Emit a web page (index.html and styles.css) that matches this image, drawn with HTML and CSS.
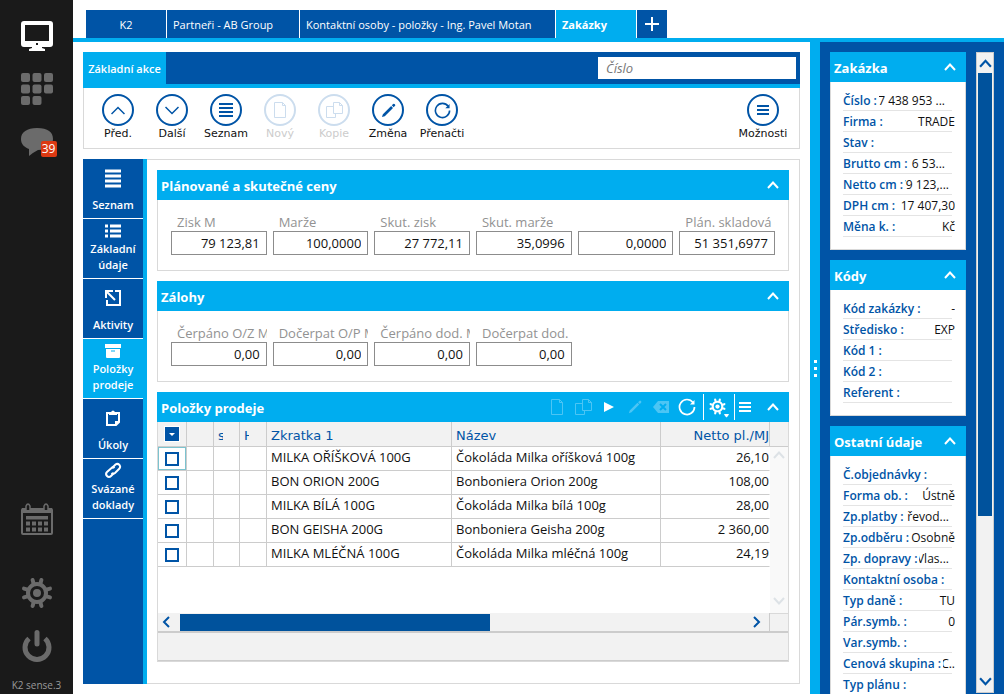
FILE: index.html
```html
<!DOCTYPE html>
<html lang="cs">
<head>
<meta charset="utf-8">
<title>K2 – Zakázky</title>
<link rel="stylesheet" href="styles.css">
</head>
<body>
<svg class="defs" aria-hidden="true">
  <symbol id="up" viewBox="0 0 12 8"><path d="M1 7L6 1.500L11 7" fill="none" stroke="currentColor" stroke-width="2"/></symbol>
  <symbol id="down" viewBox="0 0 12 8"><path d="M1 1L6 6.500L11 1" fill="none" stroke="currentColor" stroke-width="2"/></symbol>
  <symbol id="doc" viewBox="0 0 16 16"><path d="M2.500 .5H10.500L13.500 3.500V15.500H2.500ZM10.500 .5V3.500H13.500" fill="none" stroke="currentColor"/></symbol>
  <symbol id="copy" viewBox="0 0 18 16"><path d="M8.500 .5H14.500L17.500 3.500V11.500H8.500ZM14.500 .5V3.500H17.500M8.500 4.500H1.500V15.500H10.500V11.500" fill="none" stroke="currentColor"/></symbol>
  <symbol id="pencil" viewBox="0 0 16 16"><path d="M1 15L2 12L10.800 3.200L12.800 5.200L4 14ZM11.500 2.500L13 1Q13.800 .3 14.800 1.200Q15.700 2.200 15 3L13.500 4.500Z" fill="currentColor"/></symbol>
  <symbol id="reload" viewBox="0 0 18 18"><path d="M15 4.500A7.500 7.500 0 1 0 16.500 9" fill="none" stroke="currentColor" stroke-width="1.700"/><path d="M16.500 2V6.500H12Z" fill="currentColor"/></symbol>
  <symbol id="gear" viewBox="0 0 32 32"><g stroke="currentColor" fill="none"><circle cx="16" cy="16" r="9" stroke-width="4"/><path stroke-linecap="round" d="M12.600 6.500L11.600 3M19.400 6.500L20.400 3M12.600 25.500L11.600 29M19.400 25.500L20.400 29M6.500 12.600L3 11.600M6.500 19.400L3 20.400M25.500 12.600L29 11.600M25.500 19.400L29 20.400" stroke-width="4"/></g><circle cx="16" cy="16" r="4" fill="currentColor"/></symbol>
</svg>
<div class="app">
  <nav class="rail" aria-label="Aplikace">
    <button class="rail-btn on" aria-label="Plocha"><svg width="32" height="32" viewBox="0 0 32 32"><path fill="currentColor" fill-rule="evenodd" d="M3 1H29Q32 1 32 4V24Q32 27 29 27H21V28L24 29V31H8V29L11 28V27H3Q0 27 0 24V4Q0 1 3 1ZM4 5V21H28V5ZM15 23V25H17V23Z"/></svg></button>
    <button class="rail-btn" aria-label="Moduly"><svg width="32" height="32" viewBox="0 0 32 32" fill="currentColor"><rect width="9" height="9" rx="2"/><rect x="11.500" width="9" height="9" rx="2"/><rect x="23" width="9" height="9" rx="2"/><rect y="11.500" width="9" height="9" rx="2"/><rect x="11.500" y="11.500" width="9" height="9" rx="2"/><rect x="23" y="11.500" width="9" height="9" rx="2"/><rect y="23" width="9" height="9" rx="2"/><rect x="11.500" y="23" width="9" height="9" rx="2"/></svg></button>
    <button class="rail-btn" aria-label="Zprávy"><svg width="32" height="32" viewBox="0 0 32 32"><path fill="currentColor" d="M16 2C27 2 32 6 32 13S26 24 17 24Q13 26 8 30V23C3 21 0 18 0 13C0 6 6 2 16 2Z"/></svg><span class="count">39</span></button>
    <button class="rail-btn bottom" aria-label="Kalendář"><svg width="32" height="32" viewBox="0 0 32 32"><rect x="1" y="6" width="30" height="25" rx="1" fill="none" stroke="currentColor" stroke-width="2"/><path d="M1 5H31V10H1Z" fill="currentColor"/><path d="M5 7V3Q7 -1 9 3V7M23 7V3Q25 -1 27 3V7" fill="#1a1a1a" stroke="currentColor" stroke-width="1.500"/><path d="M5 13H27V16.500H5Z" fill="currentColor"/><path d="M5 20.500H27M5 26.500H27" stroke="currentColor" stroke-width="4" stroke-dasharray="4 2"/></svg></button>
    <button class="rail-btn settings" aria-label="Nastavení"><svg width="32" height="32"><use href="#gear"/></svg></button>
    <button class="rail-btn" aria-label="Odhlásit"><svg width="32" height="32" viewBox="0 0 32 32" fill="none" stroke="currentColor" stroke-width="5"><path d="M16 2.500V14" stroke-linecap="round"/><path d="M8 8.500A12 12 0 1 0 24 8.500"/></svg></button>
    <span class="version">K2 sense.3</span>
  </nav>
  <div class="stage">
    <header class="tabs">
      <button class="tab center">K2</button>
      <button class="tab partners">Partneři - AB Group</button>
      <button class="tab contacts">Kontaktní osoby - položky - Ing. Pavel Motan</button>
      <button class="tab active">Zakázky</button>
      <button class="tab add" aria-label="Nová záložka"><svg width="14" height="14"><path d="M7 0V14M0 7H14" stroke="#fff" stroke-width="2"/></svg></button>
    </header>
    <div class="work">
      <main class="main">
        <section class="actions">
          <div class="actions-head">
            <button class="actions-tab">Základní akce</button>
            <input class="search" type="text" placeholder="Číslo" aria-label="Číslo">
          </div>
          <div class="actions-body">
            <button class="act"><span class="ring"><svg width="14" height="9" viewBox="0 0 14 9"><path d="M.5 8L7 1.500L13.500 8" fill="none" stroke="currentColor" stroke-width="1.500"/></svg></span>Před.</button>
            <button class="act"><span class="ring"><svg width="14" height="9" viewBox="0 0 14 9"><path d="M.5 1L7 7.500L13.500 1" fill="none" stroke="currentColor" stroke-width="1.500"/></svg></span>Další</button>
            <button class="act"><span class="ring"><svg width="14" height="14"><path d="M0 1H14M0 5H14M0 9H14M0 13H14" stroke="currentColor" stroke-width="2"/></svg></span>Seznam</button>
            <button class="act" disabled><span class="ring"><svg width="16" height="16"><use href="#doc"/></svg></span>Nový</button>
            <button class="act" disabled><span class="ring"><svg width="18" height="16"><use href="#copy"/></svg></span>Kopie</button>
            <button class="act"><span class="ring"><svg width="15" height="15"><use href="#pencil"/></svg></span>Změna</button>
            <button class="act"><span class="ring"><svg width="17" height="17"><use href="#reload"/></svg></span>Přenačti</button>
            <button class="act last"><span class="ring"><svg width="12" height="10"><path d="M0 1H12M0 5H12M0 9H12" stroke="currentColor" stroke-width="2"/></svg></span>Možnosti</button>
          </div>
        </section>
        <div class="detail">
          <nav class="menu" aria-label="Záložky zakázky">
            <button class="item"><svg width="16" height="20"><path d="M0 3H16M0 8H16M0 13H16M0 18H16" stroke="#fff" stroke-width="3"/></svg>Seznam</button>
            <button class="item two"><svg width="16" height="20"><path d="M0 6H3M5 6H16M0 11H3M5 11H16M0 16H3M5 16H16" stroke="#fff" stroke-width="3"/></svg>Základní údaje</button>
            <button class="item"><svg width="16" height="20"><path d="M10 3H15V17H2V12M1 10V3H8M2 4L10 12" fill="none" stroke="#fff" stroke-width="2"/></svg>Aktivity</button>
            <button class="item two active"><svg width="16" height="20"><path d="M0 4H16V8H0ZM1 9H15V17Q15 18 14 18H2Q1 18 1 17Z" fill="#fff"/><path d="M6 11H10" stroke="#00adef" stroke-width="1"/></svg>Položky prodeje</button>
            <button class="item"><svg width="16" height="20"><path d="M5 5H2V17H11L14 14V5H11M11 17V14H14" fill="none" stroke="#fff" stroke-width="2"/><path d="M4 7V4H6Q8 1 10 4H12V7Z" fill="#fff"/></svg>Úkoly</button>
            <button class="item two"><svg width="18" height="20" fill="none" stroke="#fff" stroke-width="2"><path d="M8 8L11.500 4.500Q13.500 3 15.500 5Q17 7 15 9L11 13Q9 14.500 7.500 13"/><path d="M10 13L7 16Q5 18 3 16Q1 14 3 12L7.500 8Q9 6.500 10.500 8"/></svg>Svázané doklady</button>
          </nav>
          <div class="panels">
            <section class="panel">
              <header class="bar"><h2>Plánované a skutečné ceny</h2><button class="fold" aria-label="Sbalit"><svg width="12" height="8"><use href="#up"/></svg></button></header>
              <div class="fields">
                <label class="field"><span>Zisk M</span><input value="79 123,81"></label>
                <label class="field"><span>Marže</span><input value="100,0000"></label>
                <label class="field"><span>Skut. zisk</span><input value="27 772,11"></label>
                <label class="field"><span>Skut. marže</span><input value="35,0996"></label>
                <label class="field"><span></span><input value="0,0000" aria-label="Hodnota"></label>
                <label class="field"><span>Plán. skladová c</span><input value="51 351,6977"></label>
              </div>
            </section>
            <section class="panel">
              <header class="bar"><h2>Zálohy</h2><button class="fold" aria-label="Sbalit"><svg width="12" height="8"><use href="#up"/></svg></button></header>
              <div class="fields">
                <label class="field"><span>Čerpáno O/Z M</span><input value="0,00"></label>
                <label class="field"><span>Dočerpat O/P M</span><input value="0,00"></label>
                <label class="field"><span>Čerpáno dod. M</span><input value="0,00"></label>
                <label class="field"><span>Dočerpat dod. M</span><input value="0,00"></label>
              </div>
            </section>
            <section class="panel grid-panel">
              <header class="bar"><h2>Položky prodeje</h2>
                <div class="tools">
                  <button class="tool" disabled aria-label="Nový"><svg width="16" height="16"><use href="#doc"/></svg></button>
                  <button class="tool" disabled aria-label="Kopie"><svg width="18" height="16"><use href="#copy"/></svg></button>
                  <button class="tool" aria-label="Spustit"><svg width="10" height="10"><path d="M0 0L10 5L0 10Z" fill="currentColor"/></svg></button>
                  <button class="tool" disabled aria-label="Změna"><svg width="14" height="14"><use href="#pencil"/></svg></button>
                  <button class="tool" disabled aria-label="Smazat"><svg width="16" height="12"><path d="M5 0H16V12H5L0 6Z" fill="currentColor"/><path d="M7 3L13 9M13 3L7 9" stroke="#00adef" stroke-width="2"/></svg></button>
                  <button class="tool" aria-label="Přenačti"><svg width="18" height="18"><use href="#reload"/></svg></button>
                  <button class="tool split" aria-label="Nastavení"><svg width="20" height="22" viewBox="0 0 20 22"><svg width="17" height="17" y="2" viewBox="0 0 32 32"><use href="#gear"/></svg><path d="M15 18H20L19 20L17.500 21.500L16 20Z" fill="currentColor"/></svg></button>
                  <button class="tool menu-tool" aria-label="Možnosti"><svg width="12" height="10"><path d="M0 1H12M0 5H12M0 9H12" stroke="currentColor" stroke-width="2"/></svg></button>
                </div>
                <button class="fold" aria-label="Sbalit"><svg width="12" height="8"><use href="#up"/></svg></button>
              </header>
              <div class="grid-body">
                <div class="table-area">
                  <table class="grid">
                    <colgroup><col class="c-check"><col class="c-a"><col class="c-b"><col class="c-a"><col class="c-code"><col><col class="c-price"></colgroup>
                    <thead><tr><th class="pick"><button class="pick-all" aria-label="Výběr"><svg width="6" height="3"><path d="M0 0H6L3 3Z" fill="#fff"/></svg></button></th><th></th><th class="short"><span>s</span></th><th class="short"><span>H</span></th><th>Zkratka 1</th><th>Název</th><th class="num">Netto pl./MJ</th></tr></thead>
                    <tbody>
                      <tr><td class="pick current"><input type="checkbox" aria-label="MILKA OŘÍŠKOVÁ 100G"></td><td></td><td></td><td></td><td>MILKA OŘÍŠKOVÁ 100G</td><td>Čokoláda Milka oříšková 100g</td><td class="num">26,10</td></tr>
                      <tr><td class="pick"><input type="checkbox" aria-label="BON ORION 200G"></td><td></td><td></td><td></td><td>BON ORION 200G</td><td>Bonboniera Orion 200g</td><td class="num">108,00</td></tr>
                      <tr><td class="pick"><input type="checkbox" aria-label="MILKA BÍLÁ 100G"></td><td></td><td></td><td></td><td>MILKA BÍLÁ 100G</td><td>Čokoláda Milka bílá 100g</td><td class="num">28,00</td></tr>
                      <tr><td class="pick"><input type="checkbox" aria-label="BON GEISHA 200G"></td><td></td><td></td><td></td><td>BON GEISHA 200G</td><td>Bonboniera Geisha 200g</td><td class="num">2 360,00</td></tr>
                      <tr><td class="pick"><input type="checkbox" aria-label="MILKA MLÉČNÁ 100G"></td><td></td><td></td><td></td><td>MILKA MLÉČNÁ 100G</td><td>Čokoláda Milka mléčná 100g</td><td class="num">24,19</td></tr>
                    </tbody>
                  </table>
                </div>
                <div class="vscroll"><div class="vhead"></div><svg width="12" height="8"><use href="#up"/></svg><svg class="end" width="12" height="8"><use href="#down"/></svg></div>
                <div class="hscroll"><svg width="8" height="12"><path d="M7 1L2 6L7 11" fill="none" stroke="currentColor" stroke-width="2"/></svg><div class="htrack"><div class="hthumb"></div></div><svg width="8" height="12"><path d="M1 1L6 6L1 11" fill="none" stroke="currentColor" stroke-width="2"/></svg></div>
                <div class="corner"></div>
              </div>
              <footer class="grid-foot"></footer>
            </section>
          </div>
        </div>
      </main>
      <div class="splitter"><i></i><i></i><i></i></div>
      <aside class="side">
        <div class="cards">
          <section class="card">
            <header class="bar"><h2>Zakázka</h2><button class="fold" aria-label="Sbalit"><svg width="12" height="8"><use href="#up"/></svg></button></header>
            <dl>
              <div class="row"><dt>Číslo :</dt><dd class="cut wide">7 438 953 ...</dd></div>
              <div class="row"><dt>Firma :</dt><dd>TRADE</dd></div>
              <div class="row"><dt>Stav :</dt><dd></dd></div>
              <div class="row"><dt>Brutto cm :</dt><dd class="cut wide">6 53...</dd></div>
              <div class="row"><dt>Netto cm :</dt><dd class="cut">79 123,...</dd></div>
              <div class="row"><dt>DPH cm :</dt><dd>17 407,30</dd></div>
              <div class="row"><dt>Měna k. :</dt><dd>Kč</dd></div>
            </dl>
          </section>
          <section class="card">
            <header class="bar"><h2>Kódy</h2><button class="fold" aria-label="Sbalit"><svg width="12" height="8"><use href="#up"/></svg></button></header>
            <dl>
              <div class="row"><dt>Kód zakázky :</dt><dd>-</dd></div>
              <div class="row"><dt>Středisko :</dt><dd>EXP</dd></div>
              <div class="row"><dt>Kód 1 :</dt><dd></dd></div>
              <div class="row"><dt>Kód 2 :</dt><dd></dd></div>
              <div class="row"><dt>Referent :</dt><dd></dd></div>
            </dl>
          </section>
          <section class="card">
            <header class="bar"><h2>Ostatní údaje</h2><button class="fold" aria-label="Sbalit"><svg width="12" height="8"><use href="#up"/></svg></button></header>
            <dl>
              <div class="row"><dt>Č.objednávky :</dt><dd></dd></div>
              <div class="row"><dt>Forma ob. :</dt><dd>Ústně</dd></div>
              <div class="row"><dt>Zp.platby :</dt><dd class="cut">řevod...</dd></div>
              <div class="row"><dt>Zp.odběru :</dt><dd>Osobně</dd></div>
              <div class="row"><dt>Zp. dopravy :</dt><dd class="cut">Vlas...</dd></div>
              <div class="row"><dt>Kontaktní osoba :</dt><dd></dd></div>
              <div class="row"><dt>Typ daně :</dt><dd>TU</dd></div>
              <div class="row"><dt>Pár.symb. :</dt><dd>0</dd></div>
              <div class="row"><dt>Var.symb. :</dt><dd></dd></div>
              <div class="row"><dt>Cenová skupina :</dt><dd>C..</dd></div>
              <div class="row"><dt>Typ plánu :</dt><dd></dd></div>
            </dl>
          </section>
        </div>
        <div class="side-scroll"><svg width="13" height="9"><use href="#up"/></svg><div class="track"><div class="thumb"></div></div><svg width="13" height="9"><use href="#down"/></svg></div>
      </aside>
    </div>
  </div>
</div>
</body>
</html>
```
FILE: styles.css
```css
:root {
  --blue: #0054a6;
  --cyan: #00adef;
  --line: #d9d9d9;
}
* { box-sizing: border-box; }
body {
  margin: 0;
  font-family: "Open Sans", "Noto Sans", sans-serif;
  font-size: 13px;
  color: #111;
  background: #fff;
}
button, input { font: inherit; color: inherit; margin: 0; border-radius: 0; }
button { border: 0; padding: 0; background: none; }
svg { display: block; flex: none; }
h2, dl, dd { margin: 0; }
.defs { display: none; }
.app { display: flex; height: 100vh; overflow: hidden; }

.rail {
  flex: none;
  width: 73px;
  padding-top: 20px;
  background: #1a1a1a;
  color: #6b6b6b;
  display: flex;
  flex-direction: column;
  align-items: center;
}
.rail-btn { position: relative; flex: none; height: 32px; margin-bottom: 21px; }
.rail-btn.on { color: #fff; }
.rail-btn.bottom { margin-top: auto; margin-bottom: 42px; }
.rail-btn.settings + .rail-btn { margin-bottom: 15px; }
.count {
  position: absolute;
  left: 20px;
  top: 15px;
  width: 16px;
  border-radius: 2px;
  background: #dc3912;
  color: #fff;
  font-size: 12px;
  line-height: 16px;
}
.version { font-size: 10px; line-height: 16px; padding-bottom: 1px; color: #999; white-space: nowrap; }

.stage { flex: 1; min-width: 0; display: flex; flex-direction: column; }
.tabs {
  flex: none;
  display: flex;
  gap: 1px;
  padding: 10px 0 0 13px;
  border-bottom: 4px solid var(--cyan);
}
.tab {
  height: 28px;
  padding: 0 6px;
  background: var(--blue);
  color: #fff;
  font-size: 11px;
  text-align: left;
  white-space: nowrap;
}
.tab.center, .tab.active { width: 80px; }
.tab.center { text-align: center; }
.tab.partners { width: 132px; }
.tab.contacts { width: 255px; }
.tab.active { background: var(--cyan); font-weight: 700; }
.tab.add { width: 30px; padding: 0 8px; }

.work { flex: 1; min-height: 0; display: flex; }
.main { flex: 1; min-width: 0; padding: 10px; display: flex; flex-direction: column; gap: 10px; }

.actions { flex: none; border: 1px solid var(--line); border-top: 0; }
.actions-head {
  display: flex;
  justify-content: space-between;
  margin: 0 -1px;
  height: 36px;
  background: var(--blue);
  border-bottom: 4px solid var(--cyan);
}
.actions-tab { width: 83px; background: var(--cyan); color: #fff; font-size: 11px; font-weight: 600; }
.search { width: 198px; height: 22px; margin: 5px 4px 0 0; padding: 0 8px; border: 0; background: #fff; outline: 0; }
.search::placeholder { color: #777; font-style: italic; opacity: 1; }
.actions-body { display: flex; padding: 6px 9px 6px 7px; }
.act {
  width: 54px;
  display: flex;
  flex-direction: column;
  align-items: center;
  font-family: "DejaVu Sans", sans-serif;
  font-size: 11px;
  line-height: 16px;
  white-space: nowrap;
}
.act:disabled { color: #ccc; }
.act.last { margin-left: auto; }
.ring {
  width: 32px;
  height: 32px;
  border: 2px solid var(--blue);
  border-radius: 50%;
  color: var(--blue);
  display: flex;
  align-items: center;
  justify-content: center;
}
.act:disabled .ring { border-color: #ccddee; color: #ccddee; }

.detail { flex: 1; min-height: 0; display: flex; }
.menu { flex: none; width: 64px; background: var(--blue); border-right: 4px solid var(--cyan); }
.item {
  width: 100%;
  height: 60px;
  padding-top: 9px;
  border-bottom: 1px solid #fff;
  display: flex;
  flex-direction: column;
  align-items: center;
  gap: 9px;
  color: #fff;
  font-size: 11px;
  font-weight: 600;
  line-height: 16px;
}
.item.two { padding-top: 1px; gap: 1px; }
.item.active { background: var(--cyan); }
.panels {
  flex: 1;
  min-width: 0;
  padding: 10px;
  border: 1px solid var(--line);
  border-left: 0;
  display: flex;
  flex-direction: column;
  gap: 10px;
}
.panel, .card { border: 1px solid var(--line); border-top: 0; background: #fff; }
.bar {
  margin: 0 -1px;
  height: 30px;
  padding: 0 10px 0 4px;
  background: var(--cyan);
  color: #fff;
  display: flex;
  align-items: center;
}
.bar h2 { font-size: 13px; font-weight: 700; line-height: 18px; white-space: nowrap; padding-top: 2px; }
.fold { margin-left: auto; }
.fields { display: grid; grid-template-columns: repeat(6, minmax(0, 1fr)); gap: 6px; padding: 13px 13px 15px; }
.field span {
  display: block;
  height: 18px;
  padding-left: 6px;
  overflow: hidden;
  color: #929292;
  line-height: 18px;
  white-space: nowrap;
}
.field input {
  display: block;
  width: 100%;
  height: 24px;
  padding: 0 6px;
  border: 1px solid #8c8c8c;
  background: #fff;
  text-align: right;
}

.grid-panel { flex: none; }
.tools { display: flex; align-items: center; margin-left: auto; height: 26px; }
.tool { width: 26px; height: 26px; display: flex; align-items: center; justify-content: center; }
.tool:disabled { color: #4cc5f4; }
.tool.split { width: 32px; border: 1px solid #fff; border-width: 0 1px; margin-left: 3px; }
.tool.menu-tool { width: 20px; }
.tools + .fold { margin-left: 12px; }
.grid-body { display: grid; grid-template-columns: minmax(0, 1fr) 18px; grid-template-rows: 191px 18px; }
.grid { width: 100%; border-collapse: separate; border-spacing: 0; table-layout: fixed; }
.c-check { width: 29px; }
.c-a { width: 27px; }
.c-b { width: 26px; }
.c-code { width: 185px; }
.c-price { width: 109px; }
.grid th, .grid td {
  height: 24px;
  padding: 0 4px 3px;
  border: 1px solid #ccc;
  border-width: 0 1px 1px 0;
  line-height: 18px;
  text-align: left;
  white-space: nowrap;
  overflow: hidden;
}
.grid th {
  height: 25px;
  padding: 4px 4px 0;
  background: #f2f2f2;
  color: var(--blue);
  font-family: "DejaVu Sans", sans-serif;
  font-weight: 400;
}
.grid .num { text-align: right; padding-left: 0; padding-right: 0; }
.grid td.num { border-right-color: transparent; }
.grid .pick { padding: 0; }
.short span { display: block; width: 5px; overflow: hidden; }
.pick-all {
  display: flex;
  align-items: center;
  justify-content: center;
  width: 16px;
  height: 16px;
  margin: 0 auto;
  border: 1px solid #fff;
  background: var(--blue);
}
.grid input {
  display: block;
  appearance: none;
  width: 14px;
  height: 14px;
  margin: 0 auto;
  border: 2px solid var(--blue);
  background: #fff;
}
.current { box-shadow: inset 0 0 0 1px #7cc3cf; }
.vscroll { background: #f9f9f9; color: #dde2e6; display: flex; flex-direction: column; align-items: center; gap: 4px; padding-bottom: 8px; }
.vhead { align-self: stretch; height: 25px; background: #f2f2f2; border-bottom: 1px solid #ccc; }
.end { margin-top: auto; }
.hscroll { display: flex; align-items: center; gap: 10px; padding: 0 8px 0 4px; background: #f2f2f2; color: var(--blue); border-right: 1px solid #ccc; }
.htrack { flex: 1; }
.hthumb { width: 55%; height: 17px; background: #00529c; }
.corner { background: #f2f2f2; border-top: 1px solid var(--line); }
.grid-foot { height: 30px; background: #f2f2f2; border-top: 2px solid #ccc; border-bottom: 1px solid #ccc; }

.splitter {
  flex: none;
  width: 10px;
  background: var(--cyan);
  display: flex;
  flex-direction: column;
  align-items: center;
  justify-content: center;
  gap: 4px;
}
.splitter i { width: 3px; height: 3px; background: #fff; }
.side { flex: none; width: 184px; background: var(--blue); padding: 10px 10px 0; display: flex; gap: 10px; }
.cards { flex: 1; min-width: 0; overflow: hidden; display: flex; flex-direction: column; gap: 10px; }
.card { flex: none; padding-bottom: 12px; }
.card dl { padding: 8px 13px 0 12px; }
.row { display: flex; height: 21px; border-bottom: 1px solid #e4e4e4; font-size: 12px; line-height: 21px; white-space: nowrap; }
.row dt { flex: none; color: var(--blue); font-weight: 600; }
.row dd { flex: 1; min-width: 0; margin: 0 -3px 0 2px; overflow: hidden; display: flex; justify-content: flex-end; }
.row .cut { margin-right: 3px; }
.row .wide { margin-right: 7px; }
.side-scroll {
  width: 18px;
  margin-bottom: 1px;
  padding: 6px 1px;
  border: 1px solid #ccc;
  background: #f2f2f2;
  color: var(--blue);
  display: flex;
  flex-direction: column;
  align-items: center;
}
.track { flex: 1; align-self: stretch; margin: 5px 0; }
.thumb { height: 74%; background: #00529c; }
```
